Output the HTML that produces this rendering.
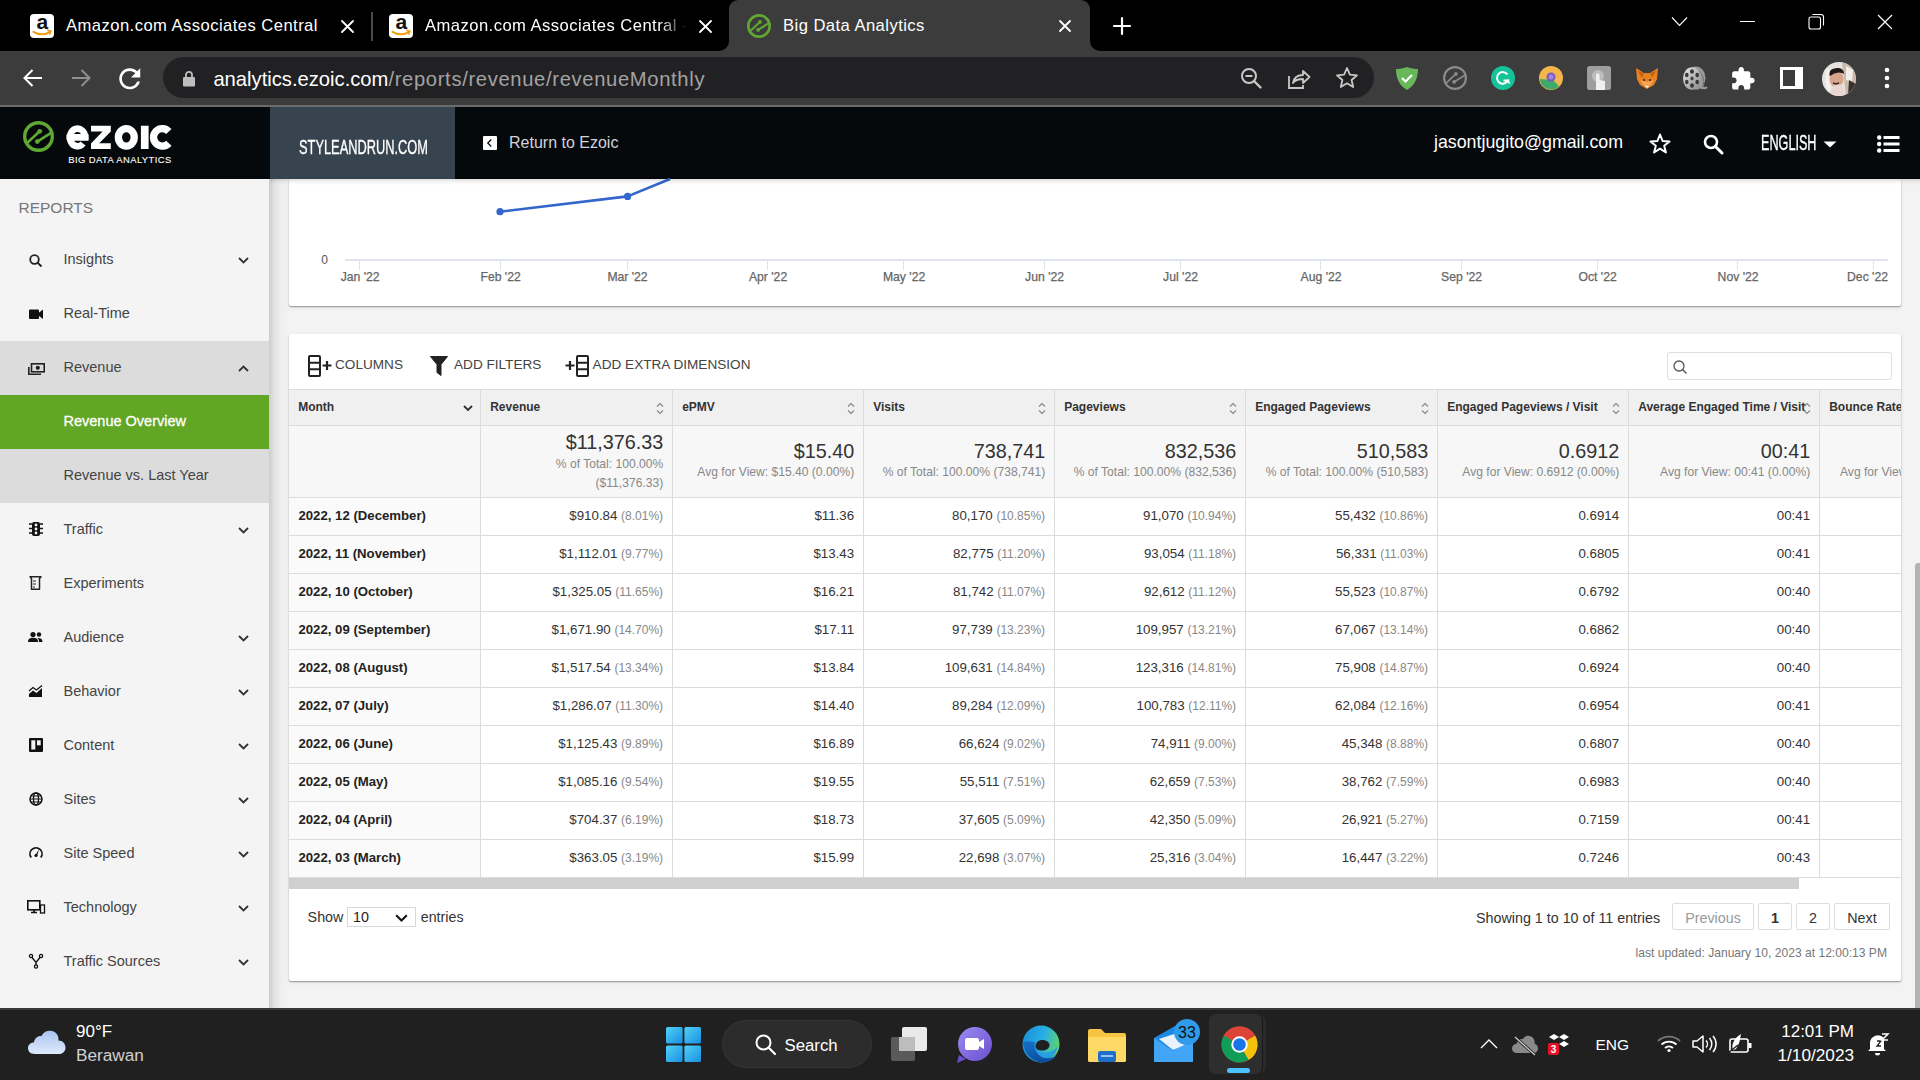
<!DOCTYPE html>
<html><head><meta charset="utf-8"><title>Big Data Analytics</title>
<style>
html,body{margin:0;padding:0;width:1920px;height:1080px;overflow:hidden;background:#f3f3f3;font-family:"Liberation Sans", sans-serif;}
.t{position:absolute;white-space:nowrap;}
.r{position:absolute;}
svg.r{overflow:visible;}
</style></head><body>
<div class="r" style="left:0px;top:0px;width:1920px;height:51px;background:#000;"></div>
<div class="r" style="left:729px;top:0;width:361px;height:51px;background:#3c3c3c;border-radius:9px 9px 0 0"></div>
<svg class="r" style="left:719px;top:41px;" width="10" height="10" viewBox="0 0 10 10"><path d="M10 0 V10 H0 A10 10 0 0 0 10 0Z" fill="#3c3c3c"/></svg>
<svg class="r" style="left:1090px;top:41px;" width="10" height="10" viewBox="0 0 10 10"><path d="M0 0 V10 H10 A10 10 0 0 1 0 0Z" fill="#3c3c3c"/></svg>
<svg class="r" style="left:30px;top:14px;" width="24" height="24" viewBox="0 0 24 24"><rect x="0" y="0" width="24" height="24" rx="4" fill="#fff"/><text x="12.3" y="15.2" text-anchor="middle" font-family="Liberation Sans" font-weight="bold" font-size="21" fill="#111">a</text><path d="M3.5 17.8 Q12 23 20.5 17.6" stroke="#f39c12" stroke-width="2" fill="none" stroke-linecap="round"/><path d="M17.8 16.2 L20.8 17.2 L19.8 20" stroke="#f39c12" stroke-width="1.5" fill="none" stroke-linecap="round"/></svg>
<div class="t" style="left:66.00px;top:18.25px;font-size:16.6px;line-height:16.6px;color:#fff;font-weight:normal;letter-spacing:0.45px;">Amazon.com Associates Central</div>
<svg class="r" style="left:341px;top:20px;" width="13" height="13" viewBox="0 0 13 13"><path d="M1 1 L12 12 M12 1 L1 12" stroke="#fff" stroke-width="1.8" stroke-linecap="round"/></svg>
<div class="r" style="left:371px;top:12px;width:2px;height:29px;background:#4a4a4a;"></div>
<svg class="r" style="left:389px;top:14px;" width="24" height="24" viewBox="0 0 24 24"><rect x="0" y="0" width="24" height="24" rx="4" fill="#fff"/><text x="12.3" y="15.2" text-anchor="middle" font-family="Liberation Sans" font-weight="bold" font-size="21" fill="#111">a</text><path d="M3.5 17.8 Q12 23 20.5 17.6" stroke="#f39c12" stroke-width="2" fill="none" stroke-linecap="round"/><path d="M17.8 16.2 L20.8 17.2 L19.8 20" stroke="#f39c12" stroke-width="1.5" fill="none" stroke-linecap="round"/></svg>
<div class="t" style="left:425px;top:18.25px;width:265px;overflow:hidden;font-size:16.6px;line-height:16.6px;letter-spacing:0.45px;color:#fff;-webkit-mask-image:linear-gradient(to right,#000 235px,transparent 262px)">Amazon.com Associates Central - Reports</div>
<svg class="r" style="left:699px;top:20px;" width="13" height="13" viewBox="0 0 13 13"><path d="M1 1 L12 12 M12 1 L1 12" stroke="#fff" stroke-width="1.8" stroke-linecap="round"/></svg>
<svg class="r" style="left:747px;top:14px;" width="24" height="24" viewBox="0 0 24 24"><circle cx="12.0" cy="12.0" r="10.68" stroke="#5fa833" stroke-width="2.64" fill="none"/><path d="M3.33 16.88 L12.93 7.97 M11.07 15.95 L21.37 9.45" stroke="#5fa833" stroke-width="2.06" stroke-linecap="round"/><circle cx="12.93" cy="7.97" r="1.86" fill="#5fa833"/><circle cx="11.07" cy="15.95" r="1.86" fill="#5fa833"/></svg>
<div class="t" style="left:783.00px;top:18.25px;font-size:16.6px;line-height:16.6px;color:#fff;font-weight:normal;letter-spacing:0.45px;">Big Data Analytics</div>
<svg class="r" style="left:1059px;top:20px;" width="12" height="12" viewBox="0 0 12 12"><path d="M1 1 L11 11 M11 1 L1 11" stroke="#fff" stroke-width="1.8" stroke-linecap="round"/></svg>
<svg class="r" style="left:1113px;top:17px;" width="18" height="18" viewBox="0 0 18 18"><path d="M9 1 V17 M1 9 H17" stroke="#fff" stroke-width="2.2" stroke-linecap="round"/></svg>
<svg class="r" style="left:1671px;top:16px;" width="17" height="11" viewBox="0 0 17 11"><path d="M1 1.5 L8.5 9.5 L16 1.5" stroke="#fff" stroke-width="1.1" fill="none"/></svg>
<div class="r" style="left:1740px;top:21px;width:15px;height:1px;background:#fff;"></div>
<svg class="r" style="left:1808px;top:13px;" width="17" height="17" viewBox="0 0 17 17"><rect x="1" y="4" width="11.5" height="12" rx="2" stroke="#fff" stroke-width="1.1" fill="none"/><path d="M4.5 1.5 H13 A2.5 2.5 0 0 1 15.5 4 V12.5" stroke="#fff" stroke-width="1.1" fill="none"/></svg>
<svg class="r" style="left:1877px;top:14px;" width="16" height="16" viewBox="0 0 16 16"><path d="M1 1 L15 15 M15 1 L1 15" stroke="#fff" stroke-width="1.2"/></svg>
<div class="r" style="left:0px;top:51px;width:1920px;height:54px;background:#3c3c3c;"></div>
<div class="r" style="left:0px;top:105px;width:1920px;height:2px;background:#6b6b6b;"></div>
<svg class="r" style="left:22px;top:67px;" width="22" height="22" viewBox="0 0 22 22"><path d="M20 11 H3 M10.5 3 L2.5 11 L10.5 19" stroke="#fff" stroke-width="2" fill="none"/></svg>
<svg class="r" style="left:70px;top:67px;" width="22" height="22" viewBox="0 0 22 22"><path d="M2 11 H19 M11.5 3 L19.5 11 L11.5 19" stroke="#8f8f8f" stroke-width="2" fill="none"/></svg>
<svg class="r" style="left:113.5px;top:62.75px;" width="31.5" height="31.5" viewBox="0 0 24 24"><path d="M17.65 6.35C16.2 4.9 14.21 4 12 4c-4.42 0-7.99 3.58-7.99 8s3.57 8 7.99 8c3.73 0 6.84-2.55 7.730-6h-2.08c-.82 2.33-3.04 4-5.65 4-3.31 0-6-2.690-6-6s2.69-6 6-6c1.66 0 3.14.69 4.22 1.78L13 11h7V4l-2.35 2.35z" fill="#fff"/></svg>
<div class="r" style="left:163px;top:57px;width:1211px;height:41px;background:#212124;border-radius:21px"></div>
<svg class="r" style="left:183px;top:70px;" width="12" height="17" viewBox="0 0 12 17"><path d="M3 7 V4.8 A3 3 0 0 1 9 4.8 V7" stroke="#bdbdbd" stroke-width="1.8" fill="none"/><rect x="0" y="7" width="12" height="9.5" rx="1.2" fill="#bdbdbd"/></svg>
<div class="t" style="left:213.40px;top:68.50px;font-size:20.2px;line-height:20.2px;color:#fff;font-weight:normal;"><span style="color:#fff">analytics.ezoic.com</span><span style="color:#a3a3a3;letter-spacing:0.66px">/reports/revenue/revenueMonthly</span></div>
<svg class="r" style="left:1240px;top:67px;" width="23" height="23" viewBox="0 0 23 23"><circle cx="9" cy="9" r="7" stroke="#c8c8c8" stroke-width="2" fill="none"/><path d="M5.5 9 H12.5" stroke="#c8c8c8" stroke-width="2"/><path d="M14 14 L20.5 20.5" stroke="#c8c8c8" stroke-width="2.4" stroke-linecap="round"/></svg>
<svg class="r" style="left:1287px;top:67px;" width="25" height="23" viewBox="0 0 25 23"><path d="M2 9 V21 H16 V18" stroke="#c8c8c8" stroke-width="1.8" fill="none"/><path d="M6 16 C7 10 11 8 16 8 V4 L22.5 10 L16 16 V12 C11 12 8 13 6 16Z" stroke="#c8c8c8" stroke-width="1.8" fill="none" stroke-linejoin="round"/></svg>
<svg class="r" style="left:1335px;top:66px;" width="24" height="24" viewBox="0 0 24 24"><path d="M12 2 L14.9 8.6 L22 9.3 L16.6 14 L18.2 21 L12 17.3 L5.8 21 L7.4 14 L2 9.3 L9.1 8.6Z" stroke="#c8c8c8" stroke-width="1.8" fill="none" stroke-linejoin="round"/></svg>
<svg class="r" style="left:1395px;top:66px;" width="24" height="24" viewBox="0 0 24 24"><path d="M12 1 C8 2.5 4.5 3 1 3 C1 13 5 20 12 24 C19 20 23 13 23 3 C19.5 3 16 2.5 12 1Z" fill="#68b85a"/><path d="M7 12 L10.5 15.5 L17 9" stroke="#fff" stroke-width="2.2" fill="none"/></svg>
<svg class="r" style="left:1443px;top:66px;" width="24" height="24" viewBox="0 0 24 24"><circle cx="12.0" cy="12.0" r="10.9" stroke="#8a8a8a" stroke-width="2.2" fill="none"/><path d="M3.33 16.88 L12.93 7.97 M11.07 15.95 L21.37 9.45" stroke="#8a8a8a" stroke-width="1.72" stroke-linecap="round"/><circle cx="12.93" cy="7.97" r="1.86" fill="#8a8a8a"/><circle cx="11.07" cy="15.95" r="1.86" fill="#8a8a8a"/></svg>
<svg class="r" style="left:1491px;top:66px;" width="24" height="24" viewBox="0 0 24 24"><circle cx="12" cy="12" r="12" fill="#15c39a"/><path d="M16.5 8.5 A5.8 5.8 0 1 0 17 14.5 H12.5" stroke="#fff" stroke-width="2" fill="none"/><path d="M14.5 16.5 L17 14.5 L18.5 17.5" stroke="#fff" stroke-width="1.6" fill="none"/></svg>
<svg class="r" style="left:1539px;top:66px;" width="24" height="24" viewBox="0 0 24 24"><circle cx="12" cy="12" r="12" fill="#f4b54a"/><path d="M1 13 A11 11 0 0 0 20 20 L14 14 Z" fill="#3eaa6a"/><circle cx="12" cy="11" r="4.5" fill="#7b57c9"/><circle cx="12" cy="11" r="2.5" fill="#9d8bd8"/></svg>
<svg class="r" style="left:1587px;top:66px;" width="24" height="24" viewBox="0 0 24 24"><rect x="0" y="0" width="24" height="24" rx="2.5" fill="#9e9e9e"/><circle cx="11" cy="10" r="6" fill="#bdbdbd"/><path d="M9 24 V9 A1.8 1.8 0 0 1 12.6 9 V14 L18 15 V24Z" fill="#f0f0f0"/></svg>
<svg class="r" style="left:1635px;top:67px;" width="24" height="23" viewBox="0 0 24 23"><path d="M1 1 L9 6 H15 L23 1 L22 12 L19 18 L12 22 L5 18 L2 12Z" fill="#e8821e"/><path d="M3 4 L9 6 L7 11Z M21 4 L15 6 L17 11Z" fill="#c4611a"/><path d="M5 13 L12 15 L19 13 L15 19 L12 21 L9 19Z" fill="#f5a55a"/><circle cx="9" cy="13" r="1" fill="#222"/><circle cx="15" cy="13" r="1" fill="#222"/><path d="M10 19 H14 L12 21Z" fill="#eee"/></svg>
<svg class="r" style="left:1682px;top:66px;" width="25" height="25" viewBox="0 0 25 25"><defs><linearGradient id="rl" x1="0" y1="0" x2="1" y2="1"><stop offset="0" stop-color="#e8e8e8"/><stop offset="1" stop-color="#8a8a8a"/></linearGradient></defs><ellipse cx="14" cy="12" rx="9.5" ry="11.5" fill="#9a9a9a"/><path d="M16 4 Q24 10 22 22 L19 24 Q25 14 16 4Z" fill="#6f6f6f"/><ellipse cx="10" cy="12.5" rx="9" ry="11.3" fill="url(#rl)"/><ellipse cx="10" cy="12.5" rx="1.6" ry="2" fill="#444"/><ellipse cx="10" cy="5.5" rx="2" ry="2.3" fill="#3a3a3a"/><ellipse cx="10" cy="19.5" rx="2" ry="2.3" fill="#3a3a3a"/><ellipse cx="4.8" cy="9" rx="1.8" ry="2.2" fill="#3a3a3a"/><ellipse cx="15.2" cy="9" rx="1.8" ry="2.2" fill="#3a3a3a"/><ellipse cx="4.8" cy="16" rx="1.8" ry="2.2" fill="#3a3a3a"/><ellipse cx="15.2" cy="16" rx="1.8" ry="2.2" fill="#3a3a3a"/><path d="M17 20 Q22 24 25 21" stroke="#9a9a9a" stroke-width="2" fill="none"/></svg>
<svg class="r" style="left:1729.9px;top:66.1px;" width="25.7" height="25.7" viewBox="0 0 24 24"><path d="M20.5 11H19V7c0-1.1-.9-2-2-2h-4V3.5C13 2.12 11.88 1 10.5 1S8 2.12 8 3.5V5H4c-1.1 0-1.99.9-1.99 2v3.8H3.5c1.49 0 2.7 1.21 2.7 2.7s-1.21 2.7-2.7 2.7H2V20c0 1.1.9 2 2 2h3.8v-1.5c0-1.49 1.21-2.7 2.7-2.7 1.49 0 2.7 1.21 2.7 2.7V22H17c1.1 0 2-.9 2-2v-4h1.5c1.38 0 2.5-1.12 2.5-2.5S21.88 11 20.5 11z" fill="#fff"/></svg>
<svg class="r" style="left:1780px;top:67px;" width="23" height="22" viewBox="0 0 23 22"><rect x="1.5" y="1.5" width="20" height="19" stroke="#fff" stroke-width="3" fill="none"/><rect x="15" y="1.5" width="6.5" height="19" fill="#fff"/></svg>
<svg class="r" style="left:1822px;top:62px;" width="34" height="34" viewBox="0 0 34 34"><defs><clipPath id="av"><circle cx="17" cy="17" r="17"/></clipPath></defs><g clip-path="url(#av)"><rect width="34" height="34" fill="#e6e2de"/><path d="M20 0 H34 V34 H24 Z" fill="#c9b9aa"/><path d="M24 4 L31 8 L30 20 L24 18Z" fill="#f2eeea"/><path d="M27 18 L34 22 V34 H26Z" fill="#3a3030"/><ellipse cx="14.5" cy="17" rx="7" ry="8.5" fill="#d6a58c"/><path d="M6 12 Q9 5 17 6 Q22 7 22 12 L20 11 Q14 9 8 14Z" fill="#221a18"/><path d="M4 6 Q2 20 6 30 L9 28 Q6 18 8 8Z" fill="#f4f0ee"/><path d="M11 21 Q14 22.5 17 21" stroke="#3a2a26" stroke-width="1.4" fill="none"/><path d="M10 24 L20 22 L23 34 H9Z" fill="#e9d6d0"/></g></svg>
<svg class="r" style="left:1884px;top:67px;" width="6" height="22" viewBox="0 0 6 22"><circle cx="3" cy="3" r="2.3" fill="#fff"/><circle cx="3" cy="11" r="2.3" fill="#fff"/><circle cx="3" cy="19" r="2.3" fill="#fff"/></svg>
<div class="r" style="left:0px;top:107px;width:1920px;height:72px;background:#05090c;"></div>
<svg class="r" style="left:23px;top:121px;" width="31" height="31" viewBox="0 0 31 31"><circle cx="15.5" cy="15.5" r="13.8" stroke="#5fa833" stroke-width="3.4" fill="none"/><path d="M4.30 21.80 L16.70 10.30 M14.30 20.60 L27.60 12.20" stroke="#5fa833" stroke-width="2.65" stroke-linecap="round"/><circle cx="16.70" cy="10.30" r="2.40" fill="#5fa833"/><circle cx="14.30" cy="20.60" r="2.40" fill="#5fa833"/></svg>
<svg class="r" style="left:0px;top:107px;" width="200" height="72" viewBox="0 0 200 72"><g transform="translate(0,-107)" fill="none" stroke="#fff">
<path d="M69.95 137.35 H85.14999999999999 A7.6 8.8 0 1 0 83.02 143.51" stroke-width="6.6"/>
<path d="M66.6 137.15 H88.5" stroke-width="5.6"/>
<path d="M91 125.75 H110.8 V131.6 L99.2 143.2 H110.8 V149 H91 V143.4 L102.6 131.6 H91Z" fill="#fff" stroke="none"/>
<ellipse cx="126.3" cy="137.35" rx="7.95" ry="8.8" stroke-width="7.3"/>
<rect x="140.9" y="125.75" width="7.7" height="23.25" fill="#fff" stroke="none"/>
<path d="M168.84 131.46 A8.8 8.8 0 1 0 168.84 143.24" stroke-width="7.3"/>
</g></svg>
<div class="t" style="left:68.30px;top:154.74px;font-size:9.4px;line-height:9.4px;color:#fff;font-weight:normal;letter-spacing:0.45px;-webkit-text-stroke:0.1px #fff;">BIG DATA ANALYTICS</div>
<div class="r" style="left:270px;top:107px;width:185px;height:72px;background:#37434e;"></div>
<div class="t" style="left:298.50px;top:135.82px;font-size:21px;line-height:21px;color:#fff;font-weight:normal;transform:scaleX(0.611);transform-origin:left top;-webkit-text-stroke:0.35px #fff;">STYLEANDRUN.COM</div>
<svg class="r" style="left:483px;top:136px;" width="14" height="14" viewBox="0 0 14 14"><rect x="0" y="0" width="14" height="14" fill="#fff" rx="1"/><path d="M8.3 3.5 L4.8 7 L8.3 10.5" stroke="#05090c" stroke-width="1.3" fill="none"/></svg>
<div class="t" style="left:509.00px;top:135.46px;font-size:16px;line-height:16px;color:#d2d2dc;font-weight:normal;">Return to Ezoic</div>
<div class="t" style="left:1434.00px;top:133.93px;font-size:17.8px;line-height:17.8px;color:#fff;font-weight:normal;">jasontjugito@gmail.com</div>
<svg class="r" style="left:1649px;top:133px;" width="22" height="21" viewBox="0 0 22 21"><path d="M11 1.5 L13.6 8 L20.5 8.4 L15.2 12.8 L16.9 19.5 L11 15.7 L5.1 19.5 L6.8 12.8 L1.5 8.4 L8.4 8Z" stroke="#fff" stroke-width="2" fill="none" stroke-linejoin="round"/></svg>
<svg class="r" style="left:1703px;top:134px;" width="21" height="20" viewBox="0 0 21 20"><circle cx="8" cy="8" r="6" stroke="#fff" stroke-width="2.6" fill="none"/><path d="M12.5 12.5 L19 19" stroke="#fff" stroke-width="3" stroke-linecap="round"/></svg>
<div class="t" style="left:1760.60px;top:133.20px;font-size:21.5px;line-height:21.5px;color:#fff;font-weight:normal;transform:scaleX(0.588);transform-origin:left top;-webkit-text-stroke:0.35px #fff;">ENGLISH</div>
<svg class="r" style="left:1823px;top:141px;" width="14" height="7" viewBox="0 0 14 7"><path d="M0.5 0.5 H13.5 L7 6.5Z" fill="#fff"/></svg>
<svg class="r" style="left:1877px;top:135px;" width="23" height="18" viewBox="0 0 23 18"><circle cx="2.2" cy="2.5" r="2.2" fill="#fff"/><circle cx="2.2" cy="9" r="2.2" fill="#fff"/><circle cx="2.2" cy="15.5" r="2.2" fill="#fff"/><rect x="6.5" y="1" width="16" height="3" fill="#fff"/><rect x="6.5" y="7.5" width="16" height="3" fill="#fff"/><rect x="6.5" y="14" width="16" height="3" fill="#fff"/></svg>
<div class="r" style="left:270px;top:179px;width:1630px;height:829px;background:#f3f3f3;"></div>
<div class="r" style="left:1900px;top:179px;width:20px;height:829px;background:#f3f3f3;"></div>
<div class="r" style="left:1915px;top:563px;width:6px;height:445px;background:#b4b4b4;border-radius:3px 0 0 0"></div>
<div class="r" style="left:289px;top:179px;width:1612px;height:127px;background:#fff;border-radius:2px;box-shadow:0 1px 1.5px rgba(0,0,0,0.38),0 2px 5px rgba(0,0,0,0.05)"></div>
<div class="t" style="right:1592.00px;top:253.84px;font-size:12px;line-height:12px;color:#555;font-weight:normal;">0</div>
<div class="r" style="left:345px;top:259px;width:1543px;height:2px;background:#dfe3ef;"></div>
<div class="r" style="left:358.5px;top:261px;width:1.0px;height:9px;background:#dfe3ef;"></div>
<div class="t" style="left:-139.90px;width:1000px;text-align:center;top:270.87px;font-size:12.2px;line-height:12.2px;color:#666;font-weight:normal;-webkit-text-stroke:0.25px #666;">Jan '22</div>
<div class="r" style="left:499.5px;top:261px;width:1.0px;height:9px;background:#dfe3ef;"></div>
<div class="t" style="left:0.62px;width:1000px;text-align:center;top:270.87px;font-size:12.2px;line-height:12.2px;color:#666;font-weight:normal;-webkit-text-stroke:0.25px #666;">Feb '22</div>
<div class="r" style="left:626.5px;top:261px;width:1.0px;height:9px;background:#dfe3ef;"></div>
<div class="t" style="left:127.54px;width:1000px;text-align:center;top:270.87px;font-size:12.2px;line-height:12.2px;color:#666;font-weight:normal;-webkit-text-stroke:0.25px #666;">Mar '22</div>
<div class="r" style="left:766.5px;top:261px;width:1.0px;height:9px;background:#dfe3ef;"></div>
<div class="t" style="left:268.06px;width:1000px;text-align:center;top:270.87px;font-size:12.2px;line-height:12.2px;color:#666;font-weight:normal;-webkit-text-stroke:0.25px #666;">Apr '22</div>
<div class="r" style="left:902.5px;top:261px;width:1.0px;height:9px;background:#dfe3ef;"></div>
<div class="t" style="left:404.05px;width:1000px;text-align:center;top:270.87px;font-size:12.2px;line-height:12.2px;color:#666;font-weight:normal;-webkit-text-stroke:0.25px #666;">May '22</div>
<div class="r" style="left:1043.5px;top:261px;width:1.0px;height:9px;background:#dfe3ef;"></div>
<div class="t" style="left:544.57px;width:1000px;text-align:center;top:270.87px;font-size:12.2px;line-height:12.2px;color:#666;font-weight:normal;-webkit-text-stroke:0.25px #666;">Jun '22</div>
<div class="r" style="left:1179.5px;top:261px;width:1.0px;height:9px;background:#dfe3ef;"></div>
<div class="t" style="left:680.55px;width:1000px;text-align:center;top:270.87px;font-size:12.2px;line-height:12.2px;color:#666;font-weight:normal;-webkit-text-stroke:0.25px #666;">Jul '22</div>
<div class="r" style="left:1319.5px;top:261px;width:1.0px;height:9px;background:#dfe3ef;"></div>
<div class="t" style="left:821.07px;width:1000px;text-align:center;top:270.87px;font-size:12.2px;line-height:12.2px;color:#666;font-weight:normal;-webkit-text-stroke:0.25px #666;">Aug '22</div>
<div class="r" style="left:1460.5px;top:261px;width:1.0px;height:9px;background:#dfe3ef;"></div>
<div class="t" style="left:961.59px;width:1000px;text-align:center;top:270.87px;font-size:12.2px;line-height:12.2px;color:#666;font-weight:normal;-webkit-text-stroke:0.25px #666;">Sep '22</div>
<div class="r" style="left:1596.5px;top:261px;width:1.0px;height:9px;background:#dfe3ef;"></div>
<div class="t" style="left:1097.58px;width:1000px;text-align:center;top:270.87px;font-size:12.2px;line-height:12.2px;color:#666;font-weight:normal;-webkit-text-stroke:0.25px #666;">Oct '22</div>
<div class="r" style="left:1736.5px;top:261px;width:1.0px;height:9px;background:#dfe3ef;"></div>
<div class="t" style="left:1238.10px;width:1000px;text-align:center;top:270.87px;font-size:12.2px;line-height:12.2px;color:#666;font-weight:normal;-webkit-text-stroke:0.25px #666;">Nov '22</div>
<div class="r" style="left:1872.5px;top:261px;width:1.0px;height:9px;background:#dfe3ef;"></div>
<div class="t" style="right:32.00px;top:270.87px;font-size:12.2px;line-height:12.2px;color:#666;font-weight:normal;-webkit-text-stroke:0.25px #666;">Dec '22</div>
<svg class="r" style="left:289px;top:179px;" width="500" height="40" viewBox="0 0 500 40"><path d="M211 32.7 L338.6 17.4 L381 0" stroke="#3366cc" stroke-width="2.6" fill="none" stroke-linejoin="round"/><circle cx="211" cy="32.7" r="3.6" fill="#3366cc"/><circle cx="338.6" cy="17.4" r="3.6" fill="#3366cc"/></svg>
<div class="r" style="left:289px;top:334px;width:1612px;height:647px;background:#fff;border-radius:2px;box-shadow:0 1px 1.5px rgba(0,0,0,0.38),0 2px 5px rgba(0,0,0,0.05)"></div>
<svg class="r" style="left:308px;top:355px;" width="13" height="22" viewBox="0 0 13 22"><rect x="1" y="1" width="11" height="20" rx="1" stroke="#222" stroke-width="2" fill="none"/><path d="M1 7.7 H12 M1 14.3 H12" stroke="#222" stroke-width="2"/></svg>
<svg class="r" style="left:322px;top:361px;" width="10" height="9" viewBox="0 0 10 9"><path d="M5 0 V9 M0.5 4.5 H9.5" stroke="#222" stroke-width="2.2"/></svg>
<div class="t" style="left:335.00px;top:358.19px;font-size:13.6px;line-height:13.6px;color:#444;font-weight:normal;">COLUMNS</div>
<svg class="r" style="left:430px;top:356px;" width="18" height="20" viewBox="0 0 18 20"><path d="M0.5 0.5 H17.5 L11 8.5 V19.5 L7 16.5 V8.5Z" fill="#222" stroke="#222" stroke-linejoin="round"/></svg>
<div class="t" style="left:454.00px;top:358.19px;font-size:13.6px;line-height:13.6px;color:#444;font-weight:normal;">ADD FILTERS</div>
<svg class="r" style="left:565px;top:361px;" width="10" height="9" viewBox="0 0 10 9"><path d="M5 0 V9 M0.5 4.5 H9.5" stroke="#222" stroke-width="2.2"/></svg>
<svg class="r" style="left:576px;top:355px;" width="13" height="22" viewBox="0 0 13 22"><rect x="1" y="1" width="11" height="20" rx="1" stroke="#222" stroke-width="2" fill="none"/><path d="M1 7.7 H12 M1 14.3 H12" stroke="#222" stroke-width="2"/></svg>
<div class="t" style="left:592.60px;top:358.19px;font-size:13.6px;line-height:13.6px;color:#444;font-weight:normal;">ADD EXTRA DIMENSION</div>
<div class="r" style="left:1667px;top:352px;width:223px;height:26px;border:1px solid #dedede;border-radius:3px;background:#fff"></div>
<svg class="r" style="left:1673px;top:360px;" width="15" height="14" viewBox="0 0 15 14"><circle cx="6" cy="6" r="5" stroke="#555" stroke-width="1.3" fill="none"/><path d="M9.6 9.6 L13.5 13.5" stroke="#555" stroke-width="1.4"/></svg>
<div class="r" style="left:289px;top:389px;width:1612px;height:490px;overflow:hidden">
<div class="r" style="left:0.00px;top:0.50px;width:1911.00px;height:36.00px;background:#f0f0f0"></div>
<div class="r" style="left:0.00px;top:36.50px;width:1911.00px;height:71.70px;background:#f7f7f7"></div>
<div class="r" style="left:0.00px;top:108.20px;width:191.00px;height:380.50px;background:#fafafa"></div>
<div class="r" style="left:0.00px;top:0.00px;width:1911.00px;height:1.00px;background:#dcdcdc"></div>
<div class="r" style="left:0.00px;top:36.00px;width:1911.00px;height:1.00px;background:#dcdcdc"></div>
<div class="r" style="left:0.00px;top:107.70px;width:1911.00px;height:1.00px;background:#dcdcdc"></div>
<div class="r" style="left:0.00px;top:145.70px;width:1911.00px;height:1.00px;background:#dcdcdc"></div>
<div class="r" style="left:0.00px;top:183.70px;width:1911.00px;height:1.00px;background:#dcdcdc"></div>
<div class="r" style="left:0.00px;top:221.70px;width:1911.00px;height:1.00px;background:#dcdcdc"></div>
<div class="r" style="left:0.00px;top:259.70px;width:1911.00px;height:1.00px;background:#dcdcdc"></div>
<div class="r" style="left:0.00px;top:297.70px;width:1911.00px;height:1.00px;background:#dcdcdc"></div>
<div class="r" style="left:0.00px;top:335.70px;width:1911.00px;height:1.00px;background:#dcdcdc"></div>
<div class="r" style="left:0.00px;top:373.70px;width:1911.00px;height:1.00px;background:#dcdcdc"></div>
<div class="r" style="left:0.00px;top:411.70px;width:1911.00px;height:1.00px;background:#dcdcdc"></div>
<div class="r" style="left:0.00px;top:449.70px;width:1911.00px;height:1.00px;background:#dcdcdc"></div>
<div class="r" style="left:0.00px;top:487.70px;width:1911.00px;height:1.00px;background:#dcdcdc"></div>
<div class="r" style="left:191.00px;top:0.50px;width:1.00px;height:488.20px;background:#dcdcdc"></div>
<div class="r" style="left:383.00px;top:0.50px;width:1.00px;height:488.20px;background:#dcdcdc"></div>
<div class="r" style="left:574.00px;top:0.50px;width:1.00px;height:488.20px;background:#dcdcdc"></div>
<div class="r" style="left:765.00px;top:0.50px;width:1.00px;height:488.20px;background:#dcdcdc"></div>
<div class="r" style="left:956.00px;top:0.50px;width:1.00px;height:488.20px;background:#dcdcdc"></div>
<div class="r" style="left:1148.00px;top:0.50px;width:1.00px;height:488.20px;background:#dcdcdc"></div>
<div class="r" style="left:1339.00px;top:0.50px;width:1.00px;height:488.20px;background:#dcdcdc"></div>
<div class="r" style="left:1530.00px;top:0.50px;width:1.00px;height:488.20px;background:#dcdcdc"></div>
<div class="r" style="left:1721.00px;top:0.50px;width:1.00px;height:488.20px;background:#dcdcdc"></div>
</div>
<div class="r" style="left:289px;top:389px;width:1612px;height:490px;overflow:hidden">
<div class="t" style="left:9.20px;top:11.74px;font-size:12px;line-height:12px;color:#333;font-weight:bold;">Month</div>
<div class="t" style="left:201.20px;top:11.74px;font-size:12px;line-height:12px;color:#333;font-weight:bold;">Revenue</div>
<div class="t" style="left:393.20px;top:11.74px;font-size:12px;line-height:12px;color:#333;font-weight:bold;">ePMV</div>
<div class="t" style="left:584.20px;top:11.74px;font-size:12px;line-height:12px;color:#333;font-weight:bold;">Visits</div>
<div class="t" style="left:775.20px;top:11.74px;font-size:12px;line-height:12px;color:#333;font-weight:bold;">Pageviews</div>
<div class="t" style="left:966.20px;top:11.74px;font-size:12px;line-height:12px;color:#333;font-weight:bold;">Engaged Pageviews</div>
<div class="t" style="left:1158.20px;top:11.74px;font-size:12px;line-height:12px;color:#333;font-weight:bold;">Engaged Pageviews / Visit</div>
<div class="t" style="left:1349.20px;top:11.74px;font-size:12px;line-height:12px;color:#333;font-weight:bold;">Average Engaged Time / Visit</div>
<div class="t" style="left:1540.20px;top:11.74px;font-size:12px;line-height:12px;color:#333;font-weight:bold;">Bounce Rate</div>
</div>
<svg class="r" style="left:463px;top:405px;" width="10" height="7" viewBox="0 0 10 7"><path d="M1 1 L5 5 L9 1" stroke="#333" stroke-width="1.9" fill="none"/></svg>
<svg class="r" style="left:656px;top:402px;" width="8" height="13" viewBox="0 0 8 13"><path d="M1 4.5 L4 1.5 L7 4.5 M1 8.5 L4 11.5 L7 8.5" stroke="#888" stroke-width="1.2" fill="none"/></svg>
<svg class="r" style="left:847px;top:402px;" width="8" height="13" viewBox="0 0 8 13"><path d="M1 4.5 L4 1.5 L7 4.5 M1 8.5 L4 11.5 L7 8.5" stroke="#888" stroke-width="1.2" fill="none"/></svg>
<svg class="r" style="left:1038px;top:402px;" width="8" height="13" viewBox="0 0 8 13"><path d="M1 4.5 L4 1.5 L7 4.5 M1 8.5 L4 11.5 L7 8.5" stroke="#888" stroke-width="1.2" fill="none"/></svg>
<svg class="r" style="left:1229px;top:402px;" width="8" height="13" viewBox="0 0 8 13"><path d="M1 4.5 L4 1.5 L7 4.5 M1 8.5 L4 11.5 L7 8.5" stroke="#888" stroke-width="1.2" fill="none"/></svg>
<svg class="r" style="left:1421px;top:402px;" width="8" height="13" viewBox="0 0 8 13"><path d="M1 4.5 L4 1.5 L7 4.5 M1 8.5 L4 11.5 L7 8.5" stroke="#888" stroke-width="1.2" fill="none"/></svg>
<svg class="r" style="left:1612px;top:402px;" width="8" height="13" viewBox="0 0 8 13"><path d="M1 4.5 L4 1.5 L7 4.5 M1 8.5 L4 11.5 L7 8.5" stroke="#888" stroke-width="1.2" fill="none"/></svg>
<svg class="r" style="left:1803px;top:402px;" width="8" height="13" viewBox="0 0 8 13"><path d="M1 4.5 L4 1.5 L7 4.5 M1 8.5 L4 11.5 L7 8.5" stroke="#888" stroke-width="1.2" fill="none"/></svg>
<div class="r" style="left:289px;top:389px;width:1612px;height:490px;overflow:hidden">
<div class="t" style="right:1237.80px;top:44.44px;font-size:19.8px;line-height:19.8px;color:#333;font-weight:normal;">$11,376.33</div>
<div class="t" style="right:1237.80px;top:68.76px;font-size:12.1px;line-height:12.1px;color:#888;font-weight:normal;">% of Total: 100.00%</div>
<div class="t" style="right:1237.80px;top:87.76px;font-size:12.1px;line-height:12.1px;color:#888;font-weight:normal;">($11,376.33)</div>
<div class="t" style="right:1046.80px;top:53.24px;font-size:19.8px;line-height:19.8px;color:#333;font-weight:normal;">$15.40</div>
<div class="t" style="right:1046.80px;top:77.46px;font-size:12.1px;line-height:12.1px;color:#888;font-weight:normal;">Avg for View: $15.40 (0.00%)</div>
<div class="t" style="right:855.80px;top:53.24px;font-size:19.8px;line-height:19.8px;color:#333;font-weight:normal;">738,741</div>
<div class="t" style="right:855.80px;top:77.46px;font-size:12.1px;line-height:12.1px;color:#888;font-weight:normal;">% of Total: 100.00% (738,741)</div>
<div class="t" style="right:664.80px;top:53.24px;font-size:19.8px;line-height:19.8px;color:#333;font-weight:normal;">832,536</div>
<div class="t" style="right:664.80px;top:77.46px;font-size:12.1px;line-height:12.1px;color:#888;font-weight:normal;">% of Total: 100.00% (832,536)</div>
<div class="t" style="right:472.80px;top:53.24px;font-size:19.8px;line-height:19.8px;color:#333;font-weight:normal;">510,583</div>
<div class="t" style="right:472.80px;top:77.46px;font-size:12.1px;line-height:12.1px;color:#888;font-weight:normal;">% of Total: 100.00% (510,583)</div>
<div class="t" style="right:281.80px;top:53.24px;font-size:19.8px;line-height:19.8px;color:#333;font-weight:normal;">0.6912</div>
<div class="t" style="right:281.80px;top:77.46px;font-size:12.1px;line-height:12.1px;color:#888;font-weight:normal;">Avg for View: 0.6912 (0.00%)</div>
<div class="t" style="right:90.80px;top:53.24px;font-size:19.8px;line-height:19.8px;color:#333;font-weight:normal;">00:41</div>
<div class="t" style="right:90.80px;top:77.46px;font-size:12.1px;line-height:12.1px;color:#888;font-weight:normal;">Avg for View: 00:41 (0.00%)</div>
<div class="t" style="left:1551.00px;top:77.46px;font-size:12.1px;line-height:12.1px;color:#888;font-weight:normal;">Avg for View: 0.00% (0.00%)</div>
<div class="t" style="left:9.40px;top:120.03px;font-size:13.2px;line-height:13.2px;color:#222;font-weight:bold;">2022, 12 (December)</div>
<div class="t" style="right:1237.90px;top:119.94px;font-size:13.3px;line-height:13.3px;color:#333;font-weight:normal;">$910.84 <span style="font-size:12px;color:#888">(8.01%)</span></div>
<div class="t" style="right:1046.90px;top:119.94px;font-size:13.3px;line-height:13.3px;color:#333;font-weight:normal;">$11.36</div>
<div class="t" style="right:855.90px;top:119.94px;font-size:13.3px;line-height:13.3px;color:#333;font-weight:normal;">80,170 <span style="font-size:12px;color:#888">(10.85%)</span></div>
<div class="t" style="right:664.90px;top:119.94px;font-size:13.3px;line-height:13.3px;color:#333;font-weight:normal;">91,070 <span style="font-size:12px;color:#888">(10.94%)</span></div>
<div class="t" style="right:472.90px;top:119.94px;font-size:13.3px;line-height:13.3px;color:#333;font-weight:normal;">55,432 <span style="font-size:12px;color:#888">(10.86%)</span></div>
<div class="t" style="right:281.90px;top:119.94px;font-size:13.3px;line-height:13.3px;color:#333;font-weight:normal;">0.6914</div>
<div class="t" style="right:90.90px;top:119.94px;font-size:13.3px;line-height:13.3px;color:#333;font-weight:normal;">00:41</div>
<div class="t" style="left:9.40px;top:158.03px;font-size:13.2px;line-height:13.2px;color:#222;font-weight:bold;">2022, 11 (November)</div>
<div class="t" style="right:1237.90px;top:157.94px;font-size:13.3px;line-height:13.3px;color:#333;font-weight:normal;">$1,112.01 <span style="font-size:12px;color:#888">(9.77%)</span></div>
<div class="t" style="right:1046.90px;top:157.94px;font-size:13.3px;line-height:13.3px;color:#333;font-weight:normal;">$13.43</div>
<div class="t" style="right:855.90px;top:157.94px;font-size:13.3px;line-height:13.3px;color:#333;font-weight:normal;">82,775 <span style="font-size:12px;color:#888">(11.20%)</span></div>
<div class="t" style="right:664.90px;top:157.94px;font-size:13.3px;line-height:13.3px;color:#333;font-weight:normal;">93,054 <span style="font-size:12px;color:#888">(11.18%)</span></div>
<div class="t" style="right:472.90px;top:157.94px;font-size:13.3px;line-height:13.3px;color:#333;font-weight:normal;">56,331 <span style="font-size:12px;color:#888">(11.03%)</span></div>
<div class="t" style="right:281.90px;top:157.94px;font-size:13.3px;line-height:13.3px;color:#333;font-weight:normal;">0.6805</div>
<div class="t" style="right:90.90px;top:157.94px;font-size:13.3px;line-height:13.3px;color:#333;font-weight:normal;">00:41</div>
<div class="t" style="left:9.40px;top:196.03px;font-size:13.2px;line-height:13.2px;color:#222;font-weight:bold;">2022, 10 (October)</div>
<div class="t" style="right:1237.90px;top:195.94px;font-size:13.3px;line-height:13.3px;color:#333;font-weight:normal;">$1,325.05 <span style="font-size:12px;color:#888">(11.65%)</span></div>
<div class="t" style="right:1046.90px;top:195.94px;font-size:13.3px;line-height:13.3px;color:#333;font-weight:normal;">$16.21</div>
<div class="t" style="right:855.90px;top:195.94px;font-size:13.3px;line-height:13.3px;color:#333;font-weight:normal;">81,742 <span style="font-size:12px;color:#888">(11.07%)</span></div>
<div class="t" style="right:664.90px;top:195.94px;font-size:13.3px;line-height:13.3px;color:#333;font-weight:normal;">92,612 <span style="font-size:12px;color:#888">(11.12%)</span></div>
<div class="t" style="right:472.90px;top:195.94px;font-size:13.3px;line-height:13.3px;color:#333;font-weight:normal;">55,523 <span style="font-size:12px;color:#888">(10.87%)</span></div>
<div class="t" style="right:281.90px;top:195.94px;font-size:13.3px;line-height:13.3px;color:#333;font-weight:normal;">0.6792</div>
<div class="t" style="right:90.90px;top:195.94px;font-size:13.3px;line-height:13.3px;color:#333;font-weight:normal;">00:40</div>
<div class="t" style="left:9.40px;top:234.03px;font-size:13.2px;line-height:13.2px;color:#222;font-weight:bold;">2022, 09 (September)</div>
<div class="t" style="right:1237.90px;top:233.94px;font-size:13.3px;line-height:13.3px;color:#333;font-weight:normal;">$1,671.90 <span style="font-size:12px;color:#888">(14.70%)</span></div>
<div class="t" style="right:1046.90px;top:233.94px;font-size:13.3px;line-height:13.3px;color:#333;font-weight:normal;">$17.11</div>
<div class="t" style="right:855.90px;top:233.94px;font-size:13.3px;line-height:13.3px;color:#333;font-weight:normal;">97,739 <span style="font-size:12px;color:#888">(13.23%)</span></div>
<div class="t" style="right:664.90px;top:233.94px;font-size:13.3px;line-height:13.3px;color:#333;font-weight:normal;">109,957 <span style="font-size:12px;color:#888">(13.21%)</span></div>
<div class="t" style="right:472.90px;top:233.94px;font-size:13.3px;line-height:13.3px;color:#333;font-weight:normal;">67,067 <span style="font-size:12px;color:#888">(13.14%)</span></div>
<div class="t" style="right:281.90px;top:233.94px;font-size:13.3px;line-height:13.3px;color:#333;font-weight:normal;">0.6862</div>
<div class="t" style="right:90.90px;top:233.94px;font-size:13.3px;line-height:13.3px;color:#333;font-weight:normal;">00:40</div>
<div class="t" style="left:9.40px;top:272.03px;font-size:13.2px;line-height:13.2px;color:#222;font-weight:bold;">2022, 08 (August)</div>
<div class="t" style="right:1237.90px;top:271.94px;font-size:13.3px;line-height:13.3px;color:#333;font-weight:normal;">$1,517.54 <span style="font-size:12px;color:#888">(13.34%)</span></div>
<div class="t" style="right:1046.90px;top:271.94px;font-size:13.3px;line-height:13.3px;color:#333;font-weight:normal;">$13.84</div>
<div class="t" style="right:855.90px;top:271.94px;font-size:13.3px;line-height:13.3px;color:#333;font-weight:normal;">109,631 <span style="font-size:12px;color:#888">(14.84%)</span></div>
<div class="t" style="right:664.90px;top:271.94px;font-size:13.3px;line-height:13.3px;color:#333;font-weight:normal;">123,316 <span style="font-size:12px;color:#888">(14.81%)</span></div>
<div class="t" style="right:472.90px;top:271.94px;font-size:13.3px;line-height:13.3px;color:#333;font-weight:normal;">75,908 <span style="font-size:12px;color:#888">(14.87%)</span></div>
<div class="t" style="right:281.90px;top:271.94px;font-size:13.3px;line-height:13.3px;color:#333;font-weight:normal;">0.6924</div>
<div class="t" style="right:90.90px;top:271.94px;font-size:13.3px;line-height:13.3px;color:#333;font-weight:normal;">00:40</div>
<div class="t" style="left:9.40px;top:310.03px;font-size:13.2px;line-height:13.2px;color:#222;font-weight:bold;">2022, 07 (July)</div>
<div class="t" style="right:1237.90px;top:309.94px;font-size:13.3px;line-height:13.3px;color:#333;font-weight:normal;">$1,286.07 <span style="font-size:12px;color:#888">(11.30%)</span></div>
<div class="t" style="right:1046.90px;top:309.94px;font-size:13.3px;line-height:13.3px;color:#333;font-weight:normal;">$14.40</div>
<div class="t" style="right:855.90px;top:309.94px;font-size:13.3px;line-height:13.3px;color:#333;font-weight:normal;">89,284 <span style="font-size:12px;color:#888">(12.09%)</span></div>
<div class="t" style="right:664.90px;top:309.94px;font-size:13.3px;line-height:13.3px;color:#333;font-weight:normal;">100,783 <span style="font-size:12px;color:#888">(12.11%)</span></div>
<div class="t" style="right:472.90px;top:309.94px;font-size:13.3px;line-height:13.3px;color:#333;font-weight:normal;">62,084 <span style="font-size:12px;color:#888">(12.16%)</span></div>
<div class="t" style="right:281.90px;top:309.94px;font-size:13.3px;line-height:13.3px;color:#333;font-weight:normal;">0.6954</div>
<div class="t" style="right:90.90px;top:309.94px;font-size:13.3px;line-height:13.3px;color:#333;font-weight:normal;">00:41</div>
<div class="t" style="left:9.40px;top:348.03px;font-size:13.2px;line-height:13.2px;color:#222;font-weight:bold;">2022, 06 (June)</div>
<div class="t" style="right:1237.90px;top:347.94px;font-size:13.3px;line-height:13.3px;color:#333;font-weight:normal;">$1,125.43 <span style="font-size:12px;color:#888">(9.89%)</span></div>
<div class="t" style="right:1046.90px;top:347.94px;font-size:13.3px;line-height:13.3px;color:#333;font-weight:normal;">$16.89</div>
<div class="t" style="right:855.90px;top:347.94px;font-size:13.3px;line-height:13.3px;color:#333;font-weight:normal;">66,624 <span style="font-size:12px;color:#888">(9.02%)</span></div>
<div class="t" style="right:664.90px;top:347.94px;font-size:13.3px;line-height:13.3px;color:#333;font-weight:normal;">74,911 <span style="font-size:12px;color:#888">(9.00%)</span></div>
<div class="t" style="right:472.90px;top:347.94px;font-size:13.3px;line-height:13.3px;color:#333;font-weight:normal;">45,348 <span style="font-size:12px;color:#888">(8.88%)</span></div>
<div class="t" style="right:281.90px;top:347.94px;font-size:13.3px;line-height:13.3px;color:#333;font-weight:normal;">0.6807</div>
<div class="t" style="right:90.90px;top:347.94px;font-size:13.3px;line-height:13.3px;color:#333;font-weight:normal;">00:40</div>
<div class="t" style="left:9.40px;top:386.03px;font-size:13.2px;line-height:13.2px;color:#222;font-weight:bold;">2022, 05 (May)</div>
<div class="t" style="right:1237.90px;top:385.94px;font-size:13.3px;line-height:13.3px;color:#333;font-weight:normal;">$1,085.16 <span style="font-size:12px;color:#888">(9.54%)</span></div>
<div class="t" style="right:1046.90px;top:385.94px;font-size:13.3px;line-height:13.3px;color:#333;font-weight:normal;">$19.55</div>
<div class="t" style="right:855.90px;top:385.94px;font-size:13.3px;line-height:13.3px;color:#333;font-weight:normal;">55,511 <span style="font-size:12px;color:#888">(7.51%)</span></div>
<div class="t" style="right:664.90px;top:385.94px;font-size:13.3px;line-height:13.3px;color:#333;font-weight:normal;">62,659 <span style="font-size:12px;color:#888">(7.53%)</span></div>
<div class="t" style="right:472.90px;top:385.94px;font-size:13.3px;line-height:13.3px;color:#333;font-weight:normal;">38,762 <span style="font-size:12px;color:#888">(7.59%)</span></div>
<div class="t" style="right:281.90px;top:385.94px;font-size:13.3px;line-height:13.3px;color:#333;font-weight:normal;">0.6983</div>
<div class="t" style="right:90.90px;top:385.94px;font-size:13.3px;line-height:13.3px;color:#333;font-weight:normal;">00:40</div>
<div class="t" style="left:9.40px;top:424.03px;font-size:13.2px;line-height:13.2px;color:#222;font-weight:bold;">2022, 04 (April)</div>
<div class="t" style="right:1237.90px;top:423.94px;font-size:13.3px;line-height:13.3px;color:#333;font-weight:normal;">$704.37 <span style="font-size:12px;color:#888">(6.19%)</span></div>
<div class="t" style="right:1046.90px;top:423.94px;font-size:13.3px;line-height:13.3px;color:#333;font-weight:normal;">$18.73</div>
<div class="t" style="right:855.90px;top:423.94px;font-size:13.3px;line-height:13.3px;color:#333;font-weight:normal;">37,605 <span style="font-size:12px;color:#888">(5.09%)</span></div>
<div class="t" style="right:664.90px;top:423.94px;font-size:13.3px;line-height:13.3px;color:#333;font-weight:normal;">42,350 <span style="font-size:12px;color:#888">(5.09%)</span></div>
<div class="t" style="right:472.90px;top:423.94px;font-size:13.3px;line-height:13.3px;color:#333;font-weight:normal;">26,921 <span style="font-size:12px;color:#888">(5.27%)</span></div>
<div class="t" style="right:281.90px;top:423.94px;font-size:13.3px;line-height:13.3px;color:#333;font-weight:normal;">0.7159</div>
<div class="t" style="right:90.90px;top:423.94px;font-size:13.3px;line-height:13.3px;color:#333;font-weight:normal;">00:41</div>
<div class="t" style="left:9.40px;top:462.03px;font-size:13.2px;line-height:13.2px;color:#222;font-weight:bold;">2022, 03 (March)</div>
<div class="t" style="right:1237.90px;top:461.94px;font-size:13.3px;line-height:13.3px;color:#333;font-weight:normal;">$363.05 <span style="font-size:12px;color:#888">(3.19%)</span></div>
<div class="t" style="right:1046.90px;top:461.94px;font-size:13.3px;line-height:13.3px;color:#333;font-weight:normal;">$15.99</div>
<div class="t" style="right:855.90px;top:461.94px;font-size:13.3px;line-height:13.3px;color:#333;font-weight:normal;">22,698 <span style="font-size:12px;color:#888">(3.07%)</span></div>
<div class="t" style="right:664.90px;top:461.94px;font-size:13.3px;line-height:13.3px;color:#333;font-weight:normal;">25,316 <span style="font-size:12px;color:#888">(3.04%)</span></div>
<div class="t" style="right:472.90px;top:461.94px;font-size:13.3px;line-height:13.3px;color:#333;font-weight:normal;">16,447 <span style="font-size:12px;color:#888">(3.22%)</span></div>
<div class="t" style="right:281.90px;top:461.94px;font-size:13.3px;line-height:13.3px;color:#333;font-weight:normal;">0.7246</div>
<div class="t" style="right:90.90px;top:461.94px;font-size:13.3px;line-height:13.3px;color:#333;font-weight:normal;">00:43</div>
</div>
<div class="r" style="left:289px;top:878px;width:1509.6px;height:11px;background:#cfcfcf;"></div>
<div class="t" style="left:307.60px;top:909.90px;font-size:14.3px;line-height:14.3px;color:#333;font-weight:normal;">Show</div>
<div class="r" style="left:347px;top:907px;width:67px;height:18px;border:1px solid #d8d8d8;background:#fff"></div>
<div class="t" style="left:353.00px;top:909.90px;font-size:14.3px;line-height:14.3px;color:#222;font-weight:normal;">10</div>
<svg class="r" style="left:395px;top:914px;" width="13" height="8" viewBox="0 0 13 8"><path d="M1.2 1.2 L6.5 6.5 L11.8 1.2" stroke="#111" stroke-width="2.1" fill="none"/></svg>
<div class="t" style="left:420.70px;top:909.90px;font-size:14.3px;line-height:14.3px;color:#333;font-weight:normal;">entries</div>
<div class="t" style="left:1476.00px;top:910.60px;font-size:14.3px;line-height:14.3px;color:#333;font-weight:normal;">Showing 1 to 10 of 11 entries</div>
<div class="r" style="left:1672px;top:903px;width:80px;height:25px;border:1px solid #dddddd;border-radius:2px;background:#fff"></div>
<div class="t" style="left:1213.00px;width:1000px;text-align:center;top:910.60px;font-size:14.3px;line-height:14.3px;color:#999;font-weight:normal;">Previous</div>
<div class="r" style="left:1758px;top:903px;width:32px;height:25px;border:1px solid #dddddd;border-radius:2px;background:#fff"></div>
<div class="t" style="left:1275.00px;width:1000px;text-align:center;top:910.60px;font-size:14.3px;line-height:14.3px;color:#333;font-weight:bold;">1</div>
<div class="r" style="left:1796px;top:903px;width:32px;height:25px;border:1px solid #dddddd;border-radius:2px;background:#fff"></div>
<div class="t" style="left:1313.00px;width:1000px;text-align:center;top:910.60px;font-size:14.3px;line-height:14.3px;color:#333;font-weight:normal;">2</div>
<div class="r" style="left:1834px;top:903px;width:54px;height:25px;border:1px solid #dddddd;border-radius:2px;background:#fff"></div>
<div class="t" style="left:1362.00px;width:1000px;text-align:center;top:910.60px;font-size:14.3px;line-height:14.3px;color:#333;font-weight:normal;">Next</div>
<div class="t" style="right:33.00px;top:946.96px;font-size:12.1px;line-height:12.1px;color:#777;font-weight:normal;">last updated: January 10, 2023 at 12:00:13 PM</div>
<div class="r" style="left:269px;top:179px;width:20px;height:829px;background:linear-gradient(to right,rgba(0,0,0,0.16),rgba(0,0,0,0.07) 25%,rgba(0,0,0,0.02) 60%,rgba(0,0,0,0))"></div>
<div class="r" style="left:0;top:179px;width:269px;height:829px;background:#f4f4f4;"></div>
<div class="t" style="left:18.50px;top:199.78px;font-size:15.5px;line-height:15.5px;color:#777;font-weight:normal;">REPORTS</div>
<div class="r" style="left:0px;top:341px;width:269px;height:54px;background:#dcdcdc;"></div>
<div class="r" style="left:0px;top:395px;width:269px;height:54px;background:#62a625;"></div>
<div class="r" style="left:0px;top:449px;width:269px;height:54px;background:#dcdcdc;"></div>
<div class="t" style="left:63.50px;top:251.93px;font-size:14.5px;line-height:14.5px;color:#444;font-weight:normal;">Insights</div>
<svg class="r" style="left:29px;top:254px;" width="14" height="14" viewBox="0 0 14 14"><circle cx="5.5" cy="5.5" r="4.3" stroke="#222" stroke-width="1.8" fill="none"/><path d="M8.6 8.6 L12.5 12.5" stroke="#222" stroke-width="2"/></svg>
<svg class="r" style="left:238px;top:257px;" width="11" height="7" viewBox="0 0 11 7"><path d="M1 1 L5.5 5.5 L10 1" stroke="#333" stroke-width="1.8" fill="none"/></svg>
<div class="t" style="left:63.50px;top:305.93px;font-size:14.5px;line-height:14.5px;color:#444;font-weight:normal;">Real-Time</div>
<svg class="r" style="left:29px;top:309px;" width="15" height="11" viewBox="0 0 15 11"><rect x="0" y="0.5" width="10" height="9.5" rx="1" fill="#111"/><path d="M9.5 4 L14 0.5 V10 L9.5 6.5Z" fill="#111"/></svg>
<div class="t" style="left:63.50px;top:359.93px;font-size:14.5px;line-height:14.5px;color:#444;font-weight:normal;">Revenue</div>
<svg class="r" style="left:28px;top:363px;" width="17" height="13" viewBox="0 0 17 13"><path d="M0.8 4 V11.2 H13" stroke="#222" stroke-width="1.6" fill="none"/><rect x="3.5" y="0.8" width="12.7" height="8" stroke="#222" stroke-width="1.6" fill="none"/><circle cx="9.8" cy="4.8" r="2.1" fill="#222"/></svg>
<svg class="r" style="left:238px;top:365px;" width="11" height="7" viewBox="0 0 11 7"><path d="M1 6 L5.5 1.5 L10 6" stroke="#333" stroke-width="1.8" fill="none"/></svg>
<div class="t" style="left:63.50px;top:413.93px;font-size:14.5px;line-height:14.5px;color:#fff;font-weight:normal;-webkit-text-stroke:0.3px #fff;">Revenue Overview</div>
<div class="t" style="left:63.50px;top:467.93px;font-size:14.5px;line-height:14.5px;color:#444;font-weight:normal;">Revenue vs. Last Year</div>
<div class="t" style="left:63.50px;top:521.93px;font-size:14.5px;line-height:14.5px;color:#444;font-weight:normal;">Traffic</div>
<svg class="r" style="left:29px;top:522px;" width="14" height="14" viewBox="0 0 14 14"><rect x="3" y="0" width="8" height="14" rx="2" fill="#111"/><path d="M0 2 H3 M11 2 H14 M0 6.5 H3 M11 6.5 H14 M0 11 H3 M11 11 H14" stroke="#111" stroke-width="1.6"/><circle cx="7" cy="3" r="1.4" fill="#f4f4f4"/><circle cx="7" cy="7" r="1.4" fill="#f4f4f4"/><circle cx="7" cy="11" r="1.4" fill="#f4f4f4"/></svg>
<svg class="r" style="left:238px;top:527px;" width="11" height="7" viewBox="0 0 11 7"><path d="M1 1 L5.5 5.5 L10 1" stroke="#333" stroke-width="1.8" fill="none"/></svg>
<div class="t" style="left:63.50px;top:575.93px;font-size:14.5px;line-height:14.5px;color:#444;font-weight:normal;">Experiments</div>
<svg class="r" style="left:29px;top:576px;" width="14" height="14" viewBox="0 0 14 14"><path d="M1 0.8 H12 L10.5 2.5 V13.2 H2.5 V2.5Z" stroke="#222" stroke-width="1.5" fill="none" stroke-linejoin="round"/><path d="M4 5 H7 M4 8 H7 M4 11 H6" stroke="#222" stroke-width="1.2"/></svg>
<div class="t" style="left:63.50px;top:629.93px;font-size:14.5px;line-height:14.5px;color:#444;font-weight:normal;">Audience</div>
<svg class="r" style="left:28px;top:631px;" width="15" height="12" viewBox="0 0 15 12"><circle cx="5" cy="3.5" r="2.6" fill="#111"/><circle cx="11" cy="3.5" r="2.2" fill="#111"/><path d="M0 11 C0 7.5 2.5 6.8 5 6.8 C7.5 6.8 10 7.5 10 11Z" fill="#111"/><path d="M9.5 6.9 C12 6.8 14.5 7.5 14.5 11 H11 C11 9 10.5 7.8 9.5 6.9Z" fill="#111"/></svg>
<svg class="r" style="left:238px;top:635px;" width="11" height="7" viewBox="0 0 11 7"><path d="M1 1 L5.5 5.5 L10 1" stroke="#333" stroke-width="1.8" fill="none"/></svg>
<div class="t" style="left:63.50px;top:683.93px;font-size:14.5px;line-height:14.5px;color:#444;font-weight:normal;">Behavior</div>
<svg class="r" style="left:29px;top:685px;" width="14" height="13" viewBox="0 0 14 13"><path d="M0 12 L0 9 L4 5.5 L7.5 8 L13 3 V12Z" fill="#111"/><path d="M0 6 L4 2.5 L7.5 5 L13 0.5" stroke="#111" stroke-width="1.3" fill="none"/></svg>
<svg class="r" style="left:238px;top:689px;" width="11" height="7" viewBox="0 0 11 7"><path d="M1 1 L5.5 5.5 L10 1" stroke="#333" stroke-width="1.8" fill="none"/></svg>
<div class="t" style="left:63.50px;top:737.93px;font-size:14.5px;line-height:14.5px;color:#444;font-weight:normal;">Content</div>
<svg class="r" style="left:29px;top:738px;" width="14" height="14" viewBox="0 0 14 14"><rect x="0" y="0" width="14" height="14" rx="1" fill="#111"/><rect x="2.3" y="2.3" width="4" height="9.2" fill="#f4f4f4"/><rect x="8" y="2.3" width="3.7" height="5" fill="#f4f4f4"/></svg>
<svg class="r" style="left:238px;top:743px;" width="11" height="7" viewBox="0 0 11 7"><path d="M1 1 L5.5 5.5 L10 1" stroke="#333" stroke-width="1.8" fill="none"/></svg>
<div class="t" style="left:63.50px;top:791.93px;font-size:14.5px;line-height:14.5px;color:#444;font-weight:normal;">Sites</div>
<svg class="r" style="left:29px;top:792px;" width="14" height="14" viewBox="0 0 14 14"><circle cx="7" cy="7" r="6" stroke="#111" stroke-width="1.5" fill="none"/><ellipse cx="7" cy="7" rx="2.5" ry="6" stroke="#111" stroke-width="1.3" fill="none"/><path d="M1 7 H13 M2 4 H12 M2 10 H12" stroke="#111" stroke-width="1.2"/></svg>
<svg class="r" style="left:238px;top:797px;" width="11" height="7" viewBox="0 0 11 7"><path d="M1 1 L5.5 5.5 L10 1" stroke="#333" stroke-width="1.8" fill="none"/></svg>
<div class="t" style="left:63.50px;top:845.93px;font-size:14.5px;line-height:14.5px;color:#444;font-weight:normal;">Site Speed</div>
<svg class="r" style="left:29px;top:846px;" width="14" height="13" viewBox="0 0 14 13"><path d="M2.2 11.5 A6 6 0 1 1 11.8 11.5" stroke="#111" stroke-width="1.7" fill="none"/><path d="M6 9.5 L10 3.5 L8 10Z" fill="#111"/><circle cx="7" cy="9.5" r="1.6" fill="#111"/></svg>
<svg class="r" style="left:238px;top:851px;" width="11" height="7" viewBox="0 0 11 7"><path d="M1 1 L5.5 5.5 L10 1" stroke="#333" stroke-width="1.8" fill="none"/></svg>
<div class="t" style="left:63.50px;top:899.93px;font-size:14.5px;line-height:14.5px;color:#444;font-weight:normal;">Technology</div>
<svg class="r" style="left:27px;top:900px;" width="18" height="14" viewBox="0 0 18 14"><rect x="0.8" y="0.8" width="12" height="9" stroke="#111" stroke-width="1.6" fill="none"/><path d="M4 12.5 H10 M7 10 V12.5" stroke="#111" stroke-width="1.6"/><rect x="13.5" y="5" width="4" height="8" stroke="#111" stroke-width="1.3" fill="#f4f4f4"/></svg>
<svg class="r" style="left:238px;top:905px;" width="11" height="7" viewBox="0 0 11 7"><path d="M1 1 L5.5 5.5 L10 1" stroke="#333" stroke-width="1.8" fill="none"/></svg>
<div class="t" style="left:63.50px;top:953.93px;font-size:14.5px;line-height:14.5px;color:#444;font-weight:normal;">Traffic Sources</div>
<svg class="r" style="left:29px;top:954px;" width="14" height="15" viewBox="0 0 14 15"><circle cx="2" cy="2" r="1.6" stroke="#111" stroke-width="1.3" fill="none"/><circle cx="12" cy="2" r="1.6" stroke="#111" stroke-width="1.3" fill="none"/><circle cx="7" cy="12.5" r="1.6" stroke="#111" stroke-width="1.3" fill="none"/><path d="M2.8 3.3 L7 8.5 L11.2 3.3 M7 8.5 V11" stroke="#111" stroke-width="1.4" fill="none"/></svg>
<svg class="r" style="left:238px;top:959px;" width="11" height="7" viewBox="0 0 11 7"><path d="M1 1 L5.5 5.5 L10 1" stroke="#333" stroke-width="1.8" fill="none"/></svg>
<div class="r" style="left:270px;top:179px;width:1650px;height:6px;background:linear-gradient(to bottom,rgba(0,0,0,0.13),rgba(0,0,0,0.04) 50%,rgba(0,0,0,0))"></div>
<div class="r" style="left:0px;top:1008px;width:1920px;height:72px;background:#202020;"></div>
<div class="r" style="left:0px;top:1008px;width:1920px;height:2px;background:#3a3a3a;"></div>
<svg class="r" style="left:28px;top:1030px;" width="38" height="25" viewBox="0 0 38 25"><defs><linearGradient id="cl" x1="0" y1="0" x2="0" y2="1"><stop offset="0" stop-color="#a9c4f0"/><stop offset="1" stop-color="#dfe9fb"/></linearGradient></defs><path d="M7 24 C2 24 0 21 0 18 C0 14.5 3 12.5 6 12.5 C6.5 8 10 5.5 13.5 6 C15.5 1.5 20 0 24 1 C28.5 2 31 6 30.5 10.5 C35 10.5 37.5 14 37.5 17.5 C37.5 21.5 34.5 24 31 24Z" fill="url(#cl)"/></svg>
<div class="t" style="left:76.00px;top:1023.41px;font-size:17px;line-height:17px;color:#fff;font-weight:normal;">90°F</div>
<div class="t" style="left:76.00px;top:1047.44px;font-size:17.2px;line-height:17.2px;color:#d0d0d0;font-weight:normal;">Berawan</div>
<svg class="r" style="left:666px;top:1027px;" width="35" height="35" viewBox="0 0 35 35"><defs><linearGradient id="wl" x1="0" y1="0" x2="1" y2="1"><stop offset="0" stop-color="#4fd2f8"/><stop offset="1" stop-color="#1a8fe0"/></linearGradient></defs><rect x="0" y="0" width="16.6" height="16.6" rx="1.5" fill="url(#wl)"/><rect x="18.4" y="0" width="16.6" height="16.6" rx="1.5" fill="url(#wl)"/><rect x="0" y="18.4" width="16.6" height="16.6" rx="1.5" fill="url(#wl)"/><rect x="18.4" y="18.4" width="16.6" height="16.6" rx="1.5" fill="url(#wl)"/></svg>
<div class="r" style="left:722px;top:1020px;width:150px;height:48px;background:#2c2c2c;border-radius:24px;box-shadow:inset 0 0 0 1px #333"></div>
<svg class="r" style="left:755px;top:1034px;" width="21" height="21" viewBox="0 0 21 21"><circle cx="8.5" cy="8.5" r="7" stroke="#fff" stroke-width="2" fill="none"/><path d="M13.5 13.5 L20 20" stroke="#fff" stroke-width="2.2" stroke-linecap="round"/></svg>
<div class="t" style="left:784.50px;top:1037.78px;font-size:16.8px;line-height:16.8px;color:#fff;font-weight:normal;">Search</div>
<svg class="r" style="left:891px;top:1027px;" width="36" height="34" viewBox="0 0 36 34"><rect x="0" y="10" width="24" height="24" rx="2" fill="#5a5a5a"/><rect x="11" y="0" width="25" height="24" rx="2" fill="#eaeaea"/><rect x="8" y="10" width="16" height="14" fill="#bdbdbd"/></svg>
<svg class="r" style="left:957px;top:1027px;" width="35" height="36" viewBox="0 0 35 36"><defs><linearGradient id="tm" x1="0" y1="0" x2="1" y2="1"><stop offset="0" stop-color="#9b8cf0"/><stop offset="1" stop-color="#6a4fd0"/></linearGradient></defs><circle cx="18" cy="17" r="17" fill="url(#tm)"/><path d="M2 28 L0 36 L9 32Z" fill="#6a4fd0"/><rect x="8" y="11" width="14" height="12" rx="2" fill="#fff"/><path d="M22 15 L27 12 V22 L22 19Z" fill="#fff"/></svg>
<svg class="r" style="left:1022px;top:1025px;" width="38" height="38" viewBox="0 0 38 38"><defs><linearGradient id="ed" x1="0" y1="0.2" x2="1" y2="0.5"><stop offset="0" stop-color="#1a8fd8"/><stop offset="0.55" stop-color="#27b0e6"/><stop offset="1" stop-color="#5fd46c"/></linearGradient><linearGradient id="ed2" x1="0" y1="0" x2="0.3" y2="1"><stop offset="0" stop-color="#1473c9"/><stop offset="1" stop-color="#0d4f9e"/></linearGradient></defs><circle cx="19" cy="19" r="18.5" fill="url(#ed)"/><path d="M1 17 C2 29 10 37 20 37.5 C26 37.5 31 35 34 31 C30 33 25 33 21 31 C14 28 11 22 13 17 C8 16 3 16 1 17Z" fill="url(#ed2)"/><path d="M13.5 21.5 C13.5 17.5 16.5 15 20.5 15 C24.5 15 27.5 17.5 27.5 20 C27.5 23 24.5 25.5 20.5 25.5 C16.5 25.5 13.5 24.5 13.5 21.5Z" fill="#202020"/><path d="M13.5 22 C15 26 19 28 24 27.5 C29 27 33 25 35.5 21 C35 26 33 30 30 32.5 C25 34 19 33 16 29 C14 27 13.5 24 13.5 22Z" fill="#2a9fe0"/></svg>
<svg class="r" style="left:1088px;top:1028px;" width="38" height="34" viewBox="0 0 38 34"><path d="M0 3 A2 2 0 0 1 2 1 H13 L17 5 H36 A2 2 0 0 1 38 7 V32 A2 2 0 0 1 36 34 H2 A2 2 0 0 1 0 32Z" fill="#f7c443"/><path d="M0 9 H38 V32 A2 2 0 0 1 36 34 H2 A2 2 0 0 1 0 32Z" fill="#ffd966"/><rect x="10" y="23" width="18" height="11" rx="2" fill="#1f6fc9"/><rect x="13" y="27" width="12" height="2" fill="#8fc4ff"/></svg>
<svg class="r" style="left:1153px;top:1018px;" width="56" height="46" viewBox="0 0 56 46"><path d="M1 20 L22 8 L40 20 V44 H1Z" fill="#1e88e5"/><path d="M1 20 L20 33 L40 20 V44 H1Z" fill="#42a5f5"/><path d="M6 21 L30 13 L36 25 L20 32Z" fill="#fff" opacity="0.9"/><circle cx="34" cy="14" r="13" fill="#2f9bea"/><text x="34" y="20" text-anchor="middle" font-family="Liberation Sans" font-size="16" fill="#111">33</text></svg>
<div class="r" style="left:1213px;top:1015px;width:53px;height:58px;background:#2a2a2a;border-radius:6px"></div>
<div class="r" style="left:1209px;top:1014px;width:53px;height:60px;background:#2e2e2e;border-radius:6px;box-shadow:1px 0 0 #1a1a1a"></div>
<svg class="r" style="left:1221px;top:1026px;" width="37" height="37" viewBox="0 0 37 37"><circle cx="18.5" cy="18.5" r="18" fill="#db4437"/><path d="M18.5 18.5 L34.1 9.5 A18 18 0 0 1 27.5 34.1Z" fill="#f4c20d"/><path d="M18.5 18.5 L27.5 34.1 A18 18 0 0 1 2.9 9.5Z" fill="#0f9d58"/><path d="M18.5 18.5 L2.9 9.5 A18 18 0 0 1 34.1 9.5Z" fill="#db4437"/><circle cx="18.5" cy="18.5" r="8.2" fill="#fff"/><circle cx="18.5" cy="18.5" r="6.3" fill="#1a73e8"/></svg>
<div class="r" style="left:1227px;top:1068px;width:23px;height:5px;background:#4cc2ff;border-radius:3px"></div>
<svg class="r" style="left:1480px;top:1038px;" width="18" height="11" viewBox="0 0 18 11"><path d="M1 10 L9 2 L17 10" stroke="#fff" stroke-width="1.3" fill="none"/></svg>
<svg class="r" style="left:1512px;top:1035px;" width="26" height="20" viewBox="0 0 26 20"><path d="M5 18 C1.5 18 0 15.5 0 13.5 C0 11 2 9 4.5 9 C5 5.5 8 3.5 11 4 C12.5 1 16 0 19 1.5 C22 3 23 6 22.5 8.5 C24.5 9 26 11 26 13.5 C26 16 24 18 21.5 18Z" fill="#8a8a8a"/><path d="M3 2 L23 20" stroke="#202020" stroke-width="3"/><path d="M3 2 L23 20" stroke="#d0d0d0" stroke-width="1.2"/></svg>
<svg class="r" style="left:1548px;top:1033px;" width="25" height="23" viewBox="0 0 25 23"><path d="M6 1 L11 4 L6 7 L1 4Z M16 1 L21 4 L16 7 L11 4Z M16 8 L21 11 L16 14 L11 11Z" fill="#fff"/><rect x="0" y="10" width="11" height="12" rx="2" fill="#e81123"/><text x="5.5" y="20" text-anchor="middle" font-family="Liberation Sans" font-weight="bold" font-size="10" fill="#fff">3</text></svg>
<div class="t" style="left:1595.40px;top:1037.38px;font-size:15.5px;line-height:15.5px;color:#fff;font-weight:normal;">ENG</div>
<svg class="r" style="left:1657px;top:1035px;" width="24" height="17" viewBox="0 0 24 17"><path d="M1 6 A16 16 0 0 1 23 6" stroke="#777" stroke-width="1.8" fill="none"/><path d="M4.5 9.5 A11 11 0 0 1 19.5 9.5" stroke="#fff" stroke-width="1.8" fill="none"/><path d="M8 13 A6 6 0 0 1 16 13" stroke="#fff" stroke-width="1.8" fill="none"/><circle cx="12" cy="15.5" r="1.6" fill="#fff"/></svg>
<svg class="r" style="left:1692px;top:1035px;" width="26" height="18" viewBox="0 0 26 18"><path d="M1 6 H5 L11 1 V17 L5 12 H1Z" stroke="#fff" stroke-width="1.5" fill="none" stroke-linejoin="round"/><path d="M14 5.5 A5 5 0 0 1 14 12.5 M17.5 3 A9 9 0 0 1 17.5 15 M21 1 A12 12 0 0 1 21 17" stroke="#fff" stroke-width="1.5" fill="none"/></svg>
<svg class="r" style="left:1728px;top:1033px;" width="25" height="21" viewBox="0 0 25 21"><rect x="2" y="6" width="18" height="13" rx="2" stroke="#fff" stroke-width="1.6" fill="none"/><rect x="20.5" y="10" width="3" height="5" fill="#fff"/><path d="M5 17 C3 12 6 5 13 1 C12 6 12 10 8 16Z" fill="#fff"/><path d="M0 20 L10 12" stroke="#202020" stroke-width="1.5"/></svg>
<div class="t" style="right:66.00px;top:1023.41px;font-size:17px;line-height:17px;color:#fff;font-weight:normal;">12:01 PM</div>
<div class="t" style="right:66.00px;top:1047.24px;font-size:17.2px;line-height:17.2px;color:#fff;font-weight:normal;">1/10/2023</div>
<svg class="r" style="left:1867px;top:1032px;" width="22" height="24" viewBox="0 0 22 24"><path d="M3 17 V11 A8 8 0 0 1 17 6 V17 L19 19 H1Z" fill="#fff"/><path d="M8 21 A2.5 2.5 0 0 0 13 21" fill="#fff"/><path d="M10 9 H14 L10 14 H14" stroke="#202020" stroke-width="1.3" fill="none"/><path d="M15 2 H21 L15 8 H21" stroke="#fff" stroke-width="1.5" fill="none"/></svg>
</body></html>
